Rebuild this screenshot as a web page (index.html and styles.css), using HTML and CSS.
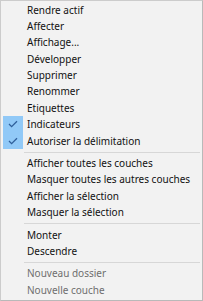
FILE: index.html
```html
<!DOCTYPE html>
<html>
<head>
<meta charset="utf-8">
<link rel="stylesheet" href="styles.css">
</head>
<body>
<div class="menu">
  <div class="item">Rendre actif</div>
  <div class="item">Affecter</div>
  <div class="item">Affichage...</div>
  <div class="item">Développer</div>
  <div class="item">Supprimer</div>
  <div class="item">Renommer</div>
  <div class="item">Etiquettes</div>
  <div class="item checked"><span class="check"><svg viewBox="0 0 10 8" width="10" height="8"><polyline points="1,4 3.6,6.6 9,1.2" fill="none" stroke="#2f5f9a" stroke-width="1.3"/></svg></span>Indicateurs</div>
  <div class="item checked"><span class="check"><svg viewBox="0 0 10 8" width="10" height="8"><polyline points="1,4 3.6,6.6 9,1.2" fill="none" stroke="#2f5f9a" stroke-width="1.3"/></svg></span>Autoriser la délimitation</div>
  <div class="sep"></div>
  <div class="item">Afficher toutes les couches</div>
  <div class="item">Masquer toutes les autres couches</div>
  <div class="item">Afficher la sélection</div>
  <div class="item">Masquer la sélection</div>
  <div class="sep"></div>
  <div class="item">Monter</div>
  <div class="item">Descendre</div>
  <div class="sep"></div>
  <div class="item disabled">Nouveau dossier</div>
  <div class="item disabled">Nouvelle couche</div>
</div>
</body>
</html>
```

FILE: styles.css
```css
html, body {
  margin: 0;
  padding: 0;
  background: #f2f2f2;
}
.menu {
  width: 203px;
  height: 301px;
  box-sizing: border-box;
  border: 1px solid #cccccc;
  border-right-color: #b9b9b9;
  border-bottom-color: #b9b9b9;
  background: #f2f2f2;
  padding-top: 0.5px;
  display: flex;
  flex-direction: column;
  font-family: "Noto Sans", "Open Sans", sans-serif;
  font-size: 10px;
  color: #111;
}
.item {
  position: relative;
  height: 16.4px;
  line-height: 16.4px;
  padding-left: 26px;
  white-space: nowrap;
}
.item.disabled {
  color: #6e6e6e;
}
.check {
  position: absolute;
  left: 2px;
  top: 0;
  width: 20px;
  height: 16.4px;
  background: #91c9f7;
  display: flex;
  align-items: center;
  justify-content: center;
}
.sep {
  height: 6px;
  display: flex;
  align-items: center;
  padding-left: 23px;
  padding-right: 2px;
}
.sep::after {
  content: "";
  flex: 1;
  height: 1px;
  background: #d7d7d7;
}
```
